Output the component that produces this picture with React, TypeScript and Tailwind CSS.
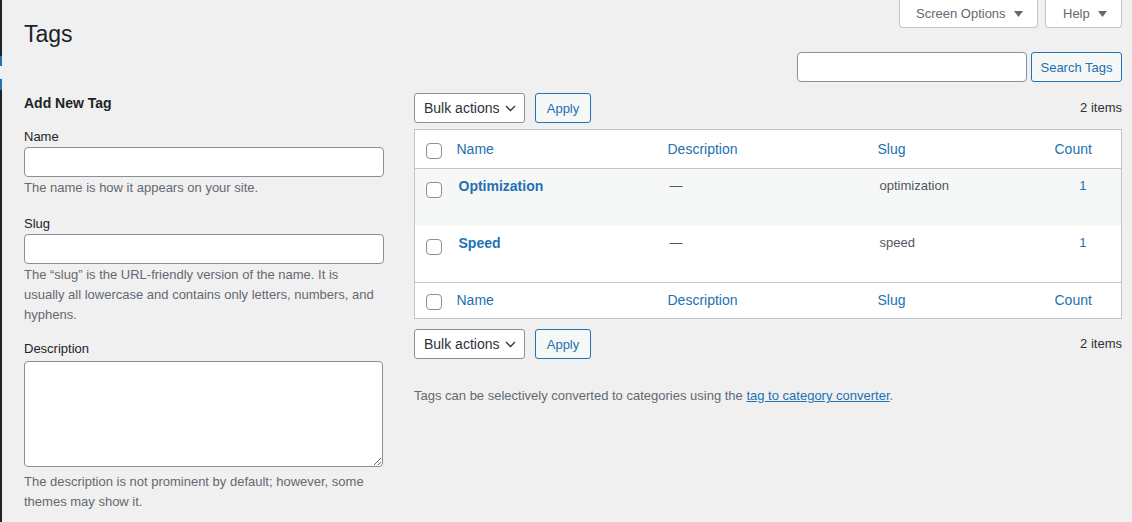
import React from 'react';

const FONT = "font-['Liberation_Sans',Arial,sans-serif]";

const Check = () => (
  <span className="block w-[16px] h-[16px] rounded-[4px] border border-[#8c8f94] bg-white" />
);

const Caret = () => (
  <svg width="9" height="6" viewBox="0 0 9 6" className="ml-[8px]">
    <path d="M0 0h9L4.5 6z" fill="#646970" />
  </svg>
);

const BulkBar: React.FC = () => (
  <div className="flex items-center h-[30px]">
    <div className="flex items-center justify-between w-[111px] h-[30px] pl-[9px] pr-[8px] bg-white border border-[#8c8f94] rounded-[3px] text-[14px] text-[#2c3338]">
      <span>Bulk actions</span>
      <svg width="11" height="7" viewBox="0 0 11 7">
        <path d="M1 1l4.5 4.5L10 1" fill="none" stroke="#2c3338" strokeWidth="1.3" />
      </svg>
    </div>
    <button className="ml-[10px] w-[56px] h-[30px] pt-[1px] rounded-[3px] border border-[#2271b1] bg-[#f6f7f7] text-[13px] text-[#2271b1]">
      Apply
    </button>
    <span className="ml-auto text-[13px] text-[#2c3338]">2 items</span>
  </div>
);

const tags = [
  { name: 'Optimization', slug: 'optimization', count: 1 },
  { name: 'Speed', slug: 'speed', count: 1 },
];

const HeadRow: React.FC<{ h: string; pt: string }> = ({ h, pt }) => (
  <tr className={`${h} text-[14px] text-[#2271b1]`}>
    <th className={`align-top ${pt} pl-[11px]`}><Check /></th>
    <th className="pl-[8px] text-left font-normal">Name</th>
    <th className="pl-[8px] text-left font-normal">Description</th>
    <th className="pl-[8px] text-left font-normal">Slug</th>
    <th className="pl-[10px] text-left font-normal">Count</th>
  </tr>
);

const Field: React.FC<{ label: string; help: React.ReactNode; mt: string }> = ({ label, help, mt }) => (
  <div className={mt}>
    <label className="block text-[13px] leading-[20px] text-[#1d2327]">{label}</label>
    <input className="block w-full h-[30px] bg-white border border-[#8c8f94] rounded-[4px]" />
    <p className="mt-[1px] max-w-[356px] text-[13px] leading-[20px] text-[#646970]">{help}</p>
  </div>
);

export default function App() {
  return (
    <div className={`flex min-h-screen bg-[#f0f0f1] ${FONT}`}>
      {/* admin menu edge */}
      <div className="w-[2px] shrink-0 flex flex-col bg-[#1d2327]">
        <div className="h-[56px]" />
        <div className="h-[10px] bg-[#2271b1]" />
        <div className="h-[13px] bg-[#f0f0f1]" />
        <div className="h-[11px] bg-[#2271b1]" />
      </div>

      <main className="flex-1 pl-[22px] pr-[10px]">
        <div className="flex justify-between items-start">
          <h1 className="pt-[19px] text-[23px] leading-[30px] text-[#1d2327]">Tags</h1>
          <div className="flex gap-[7px]">
            <button className="flex items-center h-[28px] w-[139px] pl-[16px] bg-white border border-t-0 border-[#c3c4c7] rounded-b-[4px] text-[13px] text-[#646970]">
              Screen Options <Caret />
            </button>
            <button className="flex items-center h-[28px] w-[77px] pl-[17px] bg-white border border-t-0 border-[#c3c4c7] rounded-b-[4px] text-[13px] text-[#646970]">
              Help <Caret />
            </button>
          </div>
        </div>

        <div className="flex justify-end gap-[4px] mt-[3px]">
          <input className="w-[230px] h-[30px] bg-white border border-[#8c8f94] rounded-[4px]" />
          <button className="w-[91px] h-[30px] pt-[1px] rounded-[3px] border border-[#2271b1] bg-[#f6f7f7] text-[13px] text-[#2271b1]">
            Search Tags
          </button>
        </div>

        <div className="flex gap-[30px] mt-[6px]">
          {/* add form */}
          <div className="w-[360px] shrink-0">
            <h2 className="mt-[5px] text-[14px] leading-[20px] font-bold text-[#1d2327]">Add New Tag</h2>
            <Field mt="mt-[14px]" label="Name" help="The name is how it appears on your site." />
            <Field
              mt="mt-[16px]"
              label="Slug"
              help="The “slug” is the URL-friendly version of the name. It is usually all lowercase and contains only letters, numbers, and hyphens."
            />
            <div className="mt-[14px]">
              <label className="block text-[13px] leading-[20px] text-[#1d2327]">Description</label>
              <textarea className="block mt-[2px] w-[359px] h-[106px] bg-white border border-[#8c8f94] rounded-[4px]" />
              <p className="mt-[5px] text-[13px] leading-[19.5px] text-[#646970]">
                The description is not prominent by default; however, some themes may show it.
              </p>
            </div>
          </div>

          {/* list */}
          <div className="flex-1">
            <div className="mt-[5px]"><BulkBar /></div>
            <table className="mt-[6px] w-full table-fixed border border-[#c3c4c7] bg-white border-collapse">
              <colgroup>
                <col className="w-[34px]" />
                <col className="w-[211px]" />
                <col className="w-[210px]" />
                <col className="w-[175px]" />
                <col />
              </colgroup>
              <thead className="border-b border-[#c3c4c7]">
                <HeadRow h="h-[39px]" pt="pt-[13px]" />
              </thead>
              <tbody>
                {tags.map((t, i) => (
                  <tr key={t.slug} className={`h-[57px] align-top ${i === 0 ? 'bg-[#f6f7f7]' : ''}`}>
                    <th className="pt-[13px] pl-[11px]"><Check /></th>
                    <td className="pt-[7px] pl-[10px] leading-[20px]">
                      <a className="text-[14px] font-bold text-[#2271b1]">{t.name}</a>
                    </td>
                    <td className="pt-[7px] pl-[10px] leading-[20px] text-[13px] text-[#50575e]">—</td>
                    <td className="pt-[7px] pl-[10px] leading-[20px] text-[13px] text-[#50575e]">{t.slug}</td>
                    <td className="pt-[7px] leading-[20px] text-center text-[13px] text-[#2271b1]">{t.count}</td>
                  </tr>
                ))}
              </tbody>
              <tfoot className="border-t border-[#c3c4c7]">
                <HeadRow h="h-[36px]" pt="pt-[11px]" />
              </tfoot>
            </table>
            <div className="mt-[10px]"><BulkBar /></div>
            <p className="mt-[27px] text-[13px] leading-[20px] text-[#646970]">
              Tags can be selectively converted to categories using the{' '}
              <a className="text-[#2271b1] underline">tag to category converter</a>.
            </p>
          </div>
        </div>
      </main>
    </div>
  );
}
